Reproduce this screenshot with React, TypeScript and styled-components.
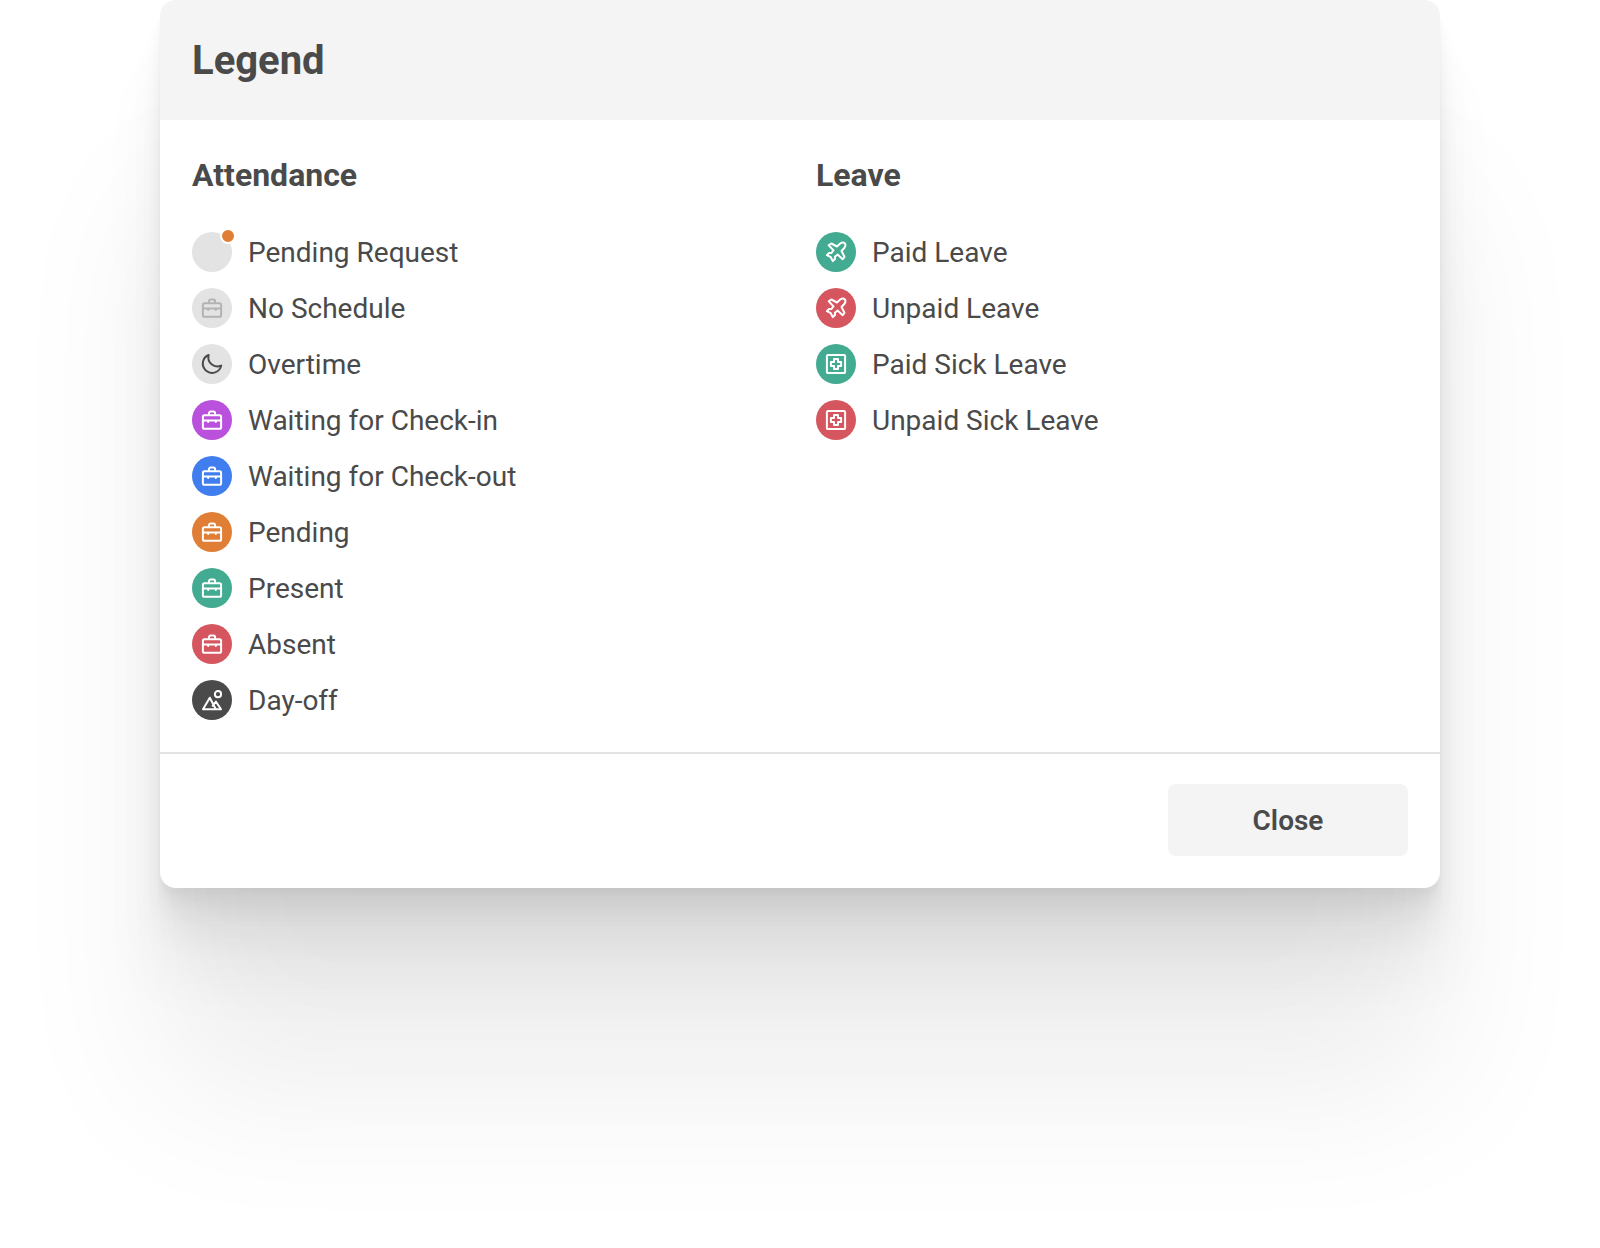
import React from "react";
import styled, { createGlobalStyle } from "styled-components";

const GlobalStyle = createGlobalStyle`
  *, *::before, *::after { box-sizing: border-box; }
  body {
    margin: 0;
    background: #ffffff;
    color: #4a4a4a;
    font-family: Roboto, "Liberation Sans", sans-serif;
  }
`;

const Page = styled.main`
  padding: 0 10%;
  min-height: 100vh;
  overflow: hidden;
`;

const Dialog = styled.section`
  border-radius: 16px;
  background: #ffffff;
  box-shadow:
    0 200px 160px rgba(0, 0, 0, 0.07),
    0 84px 67px rgba(0, 0, 0, 0.05),
    0 45px 36px rgba(0, 0, 0, 0.042),
    0 25px 20px rgba(0, 0, 0, 0.035),
    0 13px 11px rgba(0, 0, 0, 0.028),
    0 6px 4px rgba(0, 0, 0, 0.02);
`;

const Header = styled.header`
  padding: 32px;
  border-radius: 16px 16px 0 0;
  background: #f4f4f4;
`;

const Title = styled.h1`
  margin: 0;
  padding-top: 2px;
  font-size: 40px;
  line-height: 54px;
  font-weight: 700;
`;

const Body = styled.div`
  display: grid;
  grid-template-columns: 1fr 1fr;
  padding: 32px;
  column-gap: 32px;
`;

const GroupTitle = styled.h2`
  margin: 0 0 34px;
  font-size: 32px;
  line-height: 46px;
  font-weight: 700;
`;

const List = styled.ul`
  display: flex;
  flex-direction: column;
  gap: 16px;
  margin: 0;
  padding: 0;
  list-style: none;
`;

const Item = styled.li`
  display: flex;
  align-items: center;
  gap: 16px;
`;

const Label = styled.span`
  padding-top: 2px;
  font-size: 28px;
  line-height: 38px;
`;

const Disc = styled.span<{ $bg: string; $fg: string }>`
  position: relative;
  display: flex;
  flex: none;
  align-items: center;
  justify-content: center;
  width: 40px;
  height: 40px;
  border-radius: 50%;
  background: ${(p) => p.$bg};
  color: ${(p) => p.$fg};
`;

const Dot = styled.span`
  position: absolute;
  top: -4px;
  right: -4px;
  width: 16px;
  height: 16px;
  border: 2px solid #ffffff;
  border-radius: 50%;
  background: #e07e35;
`;

const Glyph = styled.svg`
  width: 20px;
  height: 20px;
  overflow: visible;
  fill: none;
  stroke: currentColor;
  stroke-width: 2;
  stroke-linecap: round;
  stroke-linejoin: round;
`;

const Footer = styled.footer`
  display: flex;
  justify-content: flex-end;
  padding: 30px 32px 32px;
  border-top: 2px solid #e3e3e3;
`;

const Button = styled.button`
  width: 240px;
  height: 72px;
  padding: 2px 0 0;
  border: 0;
  border-radius: 8px;
  background: #f4f4f4;
  color: inherit;
  font: 600 28px/38px Roboto, "Liberation Sans", sans-serif;
  cursor: pointer;
`;

const glyphs = {
  briefcase: (
    <>
      <rect x="0.9" y="5.3" width="18.2" height="13.5" rx="1.6" />
      <path d="M6.9 5V3.3a1.7 1.7 0 0 1 1.7-1.7h2.8a1.7 1.7 0 0 1 1.7 1.7V5M1 10.4h18M6.2 10.6v1.4M13.8 10.6v1.4" />
    </>
  ),
  moon: <path d="M6.6 1A9.3 9.3 0 1 0 19.2 11.6C12 14.6 5 8.8 6.6 1z" />,
  mountains: (
    <>
      <circle cx="16" cy="4.2" r="3.1" />
      <path d="M1 19.2 7.8 7.7 13.6 18.8M10.6 15.8 13.9 11.6 19 19.2H1" />
    </>
  ),
  plane: (
    <path d="M5.3 1.5 11 4.5 14.2 1.5C15.6.6 17.8.5 18.8 1.2 19.5 2.2 19.4 4.4 18.5 5.800L15.500 9 18.500 14.700 16.700 17.300 11.600 12.500 8.900 14.700 9 17 6.800 19.100 4.800 15.200.9 13.200 3 11 5.300 11.100 7.500 8.400 2.700 3.300z" />
  ),
  medical: (
    <>
      <rect x="0.9" y="0.9" width="18.2" height="18.2" rx="1.2" />
      <path d="M8 4.9h4V8h3.1v4H12v3.1H8V12H4.900V8H8z" />
    </>
  ),
};

type Entry = {
  label: string;
  bg: string;
  fg?: string;
  glyph?: keyof typeof glyphs;
  dot?: boolean;
};

const GREY = "#e3e3e3";
const GREEN = "#42ab91";
const RED = "#d6565f";

const groups: { title: string; entries: Entry[] }[] = [
  {
    title: "Attendance",
    entries: [
      { label: "Pending Request", bg: GREY, dot: true },
      { label: "No Schedule", bg: GREY, fg: "#b3b3b3", glyph: "briefcase" },
      { label: "Overtime", bg: GREY, fg: "#4a4a4a", glyph: "moon" },
      { label: "Waiting for Check-in", bg: "#b951dc", glyph: "briefcase" },
      { label: "Waiting for Check-out", bg: "#407eef", glyph: "briefcase" },
      { label: "Pending", bg: "#e07e35", glyph: "briefcase" },
      { label: "Present", bg: GREEN, glyph: "briefcase" },
      { label: "Absent", bg: RED, glyph: "briefcase" },
      { label: "Day-off", bg: "#4a4a4a", glyph: "mountains" },
    ],
  },
  {
    title: "Leave",
    entries: [
      { label: "Paid Leave", bg: GREEN, glyph: "plane" },
      { label: "Unpaid Leave", bg: RED, glyph: "plane" },
      { label: "Paid Sick Leave", bg: GREEN, glyph: "medical" },
      { label: "Unpaid Sick Leave", bg: RED, glyph: "medical" },
    ],
  },
];

export default function App() {
  return (
    <>
      <GlobalStyle />
      <Page>
        <Dialog role="dialog" aria-labelledby="legend-title">
          <Header>
            <Title id="legend-title">Legend</Title>
          </Header>
          <Body>
            {groups.map((group) => (
              <section key={group.title}>
                <GroupTitle>{group.title}</GroupTitle>
                <List>
                  {group.entries.map((entry) => (
                    <Item key={entry.label}>
                      <Disc $bg={entry.bg} $fg={entry.fg ?? "#ffffff"}>
                        {entry.glyph && (
                          <Glyph viewBox="0 0 20 20" aria-hidden="true">
                            {glyphs[entry.glyph]}
                          </Glyph>
                        )}
                        {entry.dot && <Dot />}
                      </Disc>
                      <Label>{entry.label}</Label>
                    </Item>
                  ))}
                </List>
              </section>
            ))}
          </Body>
          <Footer>
            <Button type="button">Close</Button>
          </Footer>
        </Dialog>
      </Page>
    </>
  );
}
